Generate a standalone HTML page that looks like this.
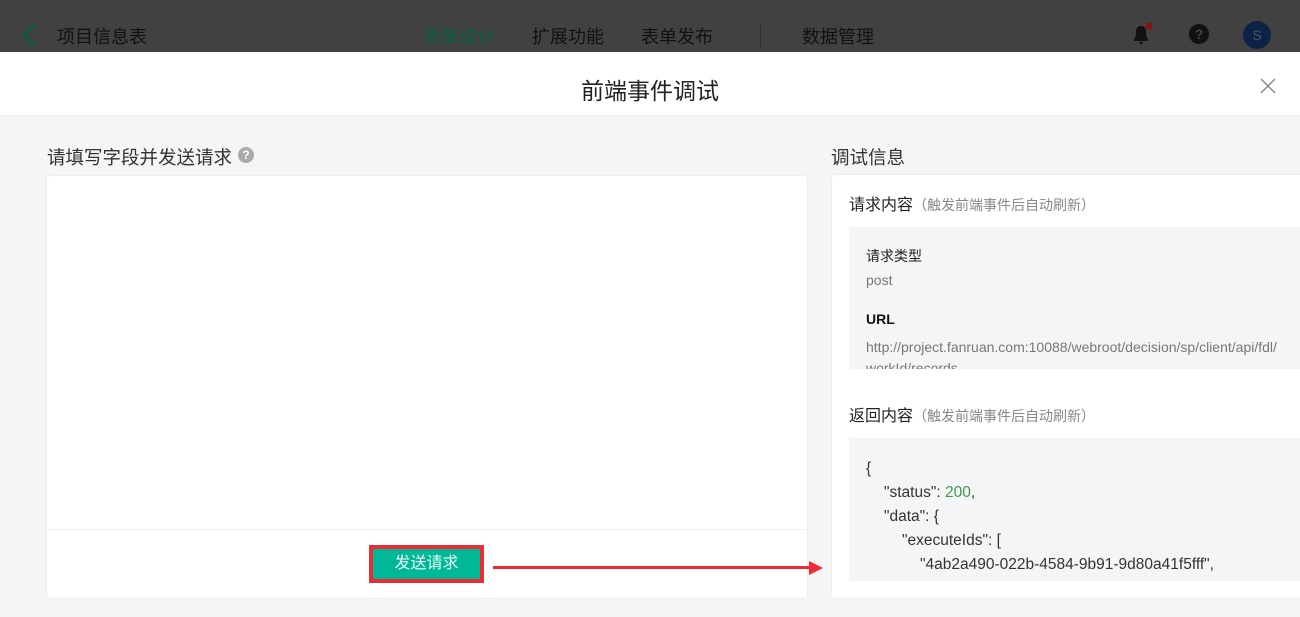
<!DOCTYPE html>
<html><head><meta charset="utf-8"><style>
*{margin:0;padding:0;box-sizing:border-box}
body{width:1300px;height:617px;overflow:hidden;background:#f4f5f7;font-family:"Liberation Sans","Noto Sans CJK SC",sans-serif;position:relative}
.a{position:absolute;white-space:nowrap}
</style></head><body>
<div class="a" style="left:0;top:0;width:1300px;height:52px;background:#414141"></div>
<svg class="a" style="left:18px;top:22px" width="20" height="26"><path d="M16 2 L6 13 L16 24" stroke="#0a5a3e" stroke-width="3" fill="none"/></svg>
<div class="a" style="left:57px;top:23px;font-size:18px;color:#111">项目信息表</div>
<div class="a" style="left:423px;top:23px;font-size:18px;color:#0a5e40">表单设计</div>
<div class="a" style="left:532px;top:23px;font-size:18px;color:#111">扩展功能</div>
<div class="a" style="left:641px;top:23px;font-size:18px;color:#111">表单发布</div>
<div class="a" style="left:760px;top:24px;width:1px;height:24px;background:#333"></div>
<div class="a" style="left:802px;top:23px;font-size:18px;color:#111">数据管理</div>
<svg class="a" style="left:1130px;top:22px" width="26" height="26"><path d="M4 19 L4 17 Q6 15 6 10 Q6 4 11 4 Q16 4 16 10 Q16 15 18 17 L18 19Z M9 20 L13 20 L11 23Z" fill="#111"/><circle cx="19" cy="4" r="3.5" fill="#8a1010"/></svg>
<div class="a" style="left:1189px;top:24px;width:20px;height:20px;border-radius:50%;background:#111;color:#444;font-size:14px;font-weight:bold;text-align:center;line-height:20px">?</div>
<div class="a" style="left:1243px;top:21px;width:28px;height:28px;border-radius:50%;background:#0c2246;color:#556;font-size:14px;text-align:center;line-height:28px">S</div>
<div class="a" style="left:0;top:52px;width:1300px;height:64px;background:#fff;border-bottom:1px solid #eee"></div>
<div class="a" style="left:581px;top:72px;font-size:23px;color:#222">前端事件调试</div>
<svg class="a" style="left:1260px;top:78px" width="16" height="16"><path d="M1 1L15 15M15 1L1 15" stroke="#888" stroke-width="1.5"/></svg>
<div class="a" style="left:47px;top:144px;font-size:18.5px;color:#333">请填写字段并发送请求</div>
<div class="a" style="left:238px;top:147px;width:16px;height:16px;border-radius:50%;background:#aaa;color:#fff;font-size:12px;font-weight:bold;text-align:center;line-height:16px">?</div>
<div class="a" style="left:47px;top:176px;width:760px;height:422px;background:#fff;border-radius:3px;box-shadow:0 0 2px rgba(0,0,0,.08)"></div>
<div class="a" style="left:47px;top:529px;width:760px;height:1px;background:#eceef1"></div>
<div class="a" style="left:369px;top:545px;width:115px;height:38px;border:4px solid #ee2a32;background:#00b898;color:#eafff8;font-size:16px;text-align:center;line-height:30px">发送请求</div>
<div class="a" style="left:493px;top:566px;width:318px;height:3px;background:#ee2a32"></div>
<svg class="a" style="left:809px;top:561px" width="14" height="14"><path d="M0 0L14 7L0 14Z" fill="#ee2a32"/></svg>
<div class="a" style="left:831px;top:144px;font-size:18.5px;color:#333">调试信息</div>
<div class="a" style="left:832px;top:175px;width:470px;height:423px;background:#fff;border-radius:3px;box-shadow:0 0 2px rgba(0,0,0,.08)"></div>
<div class="a" style="left:849px;top:191px;font-size:16px;color:#222">请求内容<span style="font-size:14px;color:#888">（触发前端事件后自动刷新）</span></div>
<div class="a" style="left:849px;top:227px;width:451px;height:142px;background:#f4f5f7;overflow:hidden">
<div class="a" style="left:17px;top:19px;font-size:14px;color:#222">请求类型</div>
<div class="a" style="left:17px;top:45px;font-size:14px;color:#777">post</div>
<div class="a" style="left:17px;top:84px;font-size:14px;color:#111;font-weight:bold">URL</div>
<div class="a" style="left:17px;top:110px;font-size:14px;color:#777;line-height:21px">http://project.fanruan.com:10088/webroot/decision/sp/client/api/fdl/<br>workId/records</div>
</div>
<div class="a" style="left:849px;top:402px;font-size:16px;color:#222">返回内容<span style="font-size:14px;color:#888">（触发前端事件后自动刷新）</span></div>
<div class="a" style="left:849px;top:438px;width:451px;height:143px;background:#f4f5f7;overflow:hidden;font-size:15.5px;color:#333;line-height:24px">
<div class="a" style="left:17px;top:19px">{</div>
<div class="a" style="left:35px;top:43px">"status": <span style="color:#3c9a4e">200</span>,</div>
<div class="a" style="left:35px;top:67px">"data": {</div>
<div class="a" style="left:53px;top:91px">"executeIds": [</div>
<div class="a" style="left:71px;top:115px">"4ab2a490-022b-4584-9b91-9d80a41f5fff",</div>
</div>
</body></html>
